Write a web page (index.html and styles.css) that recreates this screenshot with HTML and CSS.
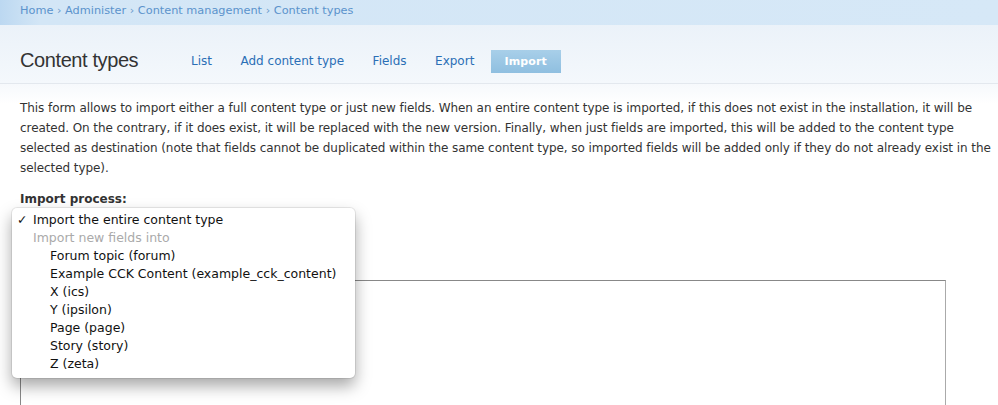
FILE: index.html
```html
<!DOCTYPE html>
<html>
<head>
<meta charset="utf-8">
<link rel="stylesheet" href="styles.css">
</head>
<body>
<div class="breadcrumb">
  <a href="#">Home</a> › <a href="#">Administer</a> › <a href="#">Content management</a> › <a href="#">Content types</a>
</div>
<div class="header">
  <h1 class="title">Content types</h1>
  <ul class="tabs">
    <li><a href="#">List</a></li>
    <li><a href="#">Add content type</a></li>
    <li><a href="#">Fields</a></li>
    <li><a href="#">Export</a></li>
    <li class="active"><a href="#">Import</a></li>
  </ul>
</div>
<div class="content">
  <p class="intro">This form allows to import either a full content type or just new fields. When an entire content type is imported, if this does not exist in the installation, it will be created. On the contrary, if it does exist, it will be replaced with the new version. Finally, when just fields are imported, this will be added to the content type selected as destination (note that fields cannot be duplicated within the same content type, so imported fields will be added only if they do not already exist in the selected type).</p>
  <div class="field">
    <label class="label">Import process:</label>
    <div class="select-wrap">
      <div class="select">Import the entire content type</div>
      <div class="popup">
        <div class="opt selected"><span class="check">✓</span>Import the entire content type</div>
        <div class="opt group">Import new fields into</div>
        <div class="opt sub">Forum topic (forum)</div>
        <div class="opt sub">Example CCK Content (example_cck_content)</div>
        <div class="opt sub">X (ics)</div>
        <div class="opt sub">Y (ipsilon)</div>
        <div class="opt sub">Page (page)</div>
        <div class="opt sub">Story (story)</div>
        <div class="opt sub">Z (zeta)</div>
      </div>
    </div>
  </div>
  <div class="field">
    <label class="label faded">Import data:</label>
    <div class="textarea"></div>
  </div>
</div>
</body>
</html>
```
FILE: styles.css
```css
html, body { margin: 0; padding: 0; background: #fff; }
body { font-family: "DejaVu Sans", Verdana, sans-serif; font-size: 12px; color: #333; overflow: hidden; height: 405px; }
a { text-decoration: none; }
.breadcrumb {
  height: 25px; box-sizing: border-box; padding: 2px 20px 0;
  background: linear-gradient(to right, #bcd8f1 0, #d3e6f6 40px, #d6e8f7 100%);
  color: #6b9ccc; font-size: 11.3px; line-height: 17px;
}
.breadcrumb a { color: #5b93cc; }
.header {
  height: 59px; box-sizing: border-box; display: flex; align-items: flex-start;
  padding: 0 20px; background: linear-gradient(to bottom, #ebf2f9, #f4f8fc);
  border-bottom: 1px solid #e3e8ee;
}
.title {
  margin: 23px 0 0; font-family: "Liberation Sans", Arial, sans-serif; font-weight: normal;
  font-size: 20px; line-height: 24px; color: #333; letter-spacing: -0.4px; width: 156.75px; flex: none;
}
.tabs { list-style: none; margin: 25px 0 0; padding: 0; display: flex; }
.tabs li a { display: block; padding: 3px 14.25px; color: #2b6fb6; font-size: 12px; line-height: 17px; }
.tabs li.active a {
  background: linear-gradient(to bottom, #a8cfe9, #8fbfe0); color: #fff; font-weight: bold;
  font-size: 11px; padding: 3px 14px 3px; margin-left: 2px; letter-spacing: 0.1px;
}
.content { padding: 14px 0 0 20px; background: linear-gradient(to bottom, #f6f9fc, #fff 20px); }
.intro { margin: 0; line-height: 20px; letter-spacing: -0.07px; }
.field { margin-top: 12px; }
.label { display: block; font-weight: bold; line-height: 18px; }
.faded { color: #ddd; margin-top: 31px; }
.select-wrap { position: relative; height: 20px; }
.select {
  margin-left: -8px; width: 288px; height: 18px; border-radius: 4px; background: #f1f4f8; color: #f1f4f8;
  font-size: 12px; line-height: 18px; padding-left: 8px; position: relative; top: 3px;
}
.popup {
  position: absolute; left: -8px; top: 0; width: 343px; box-sizing: border-box;
  background: #fff; border-radius: 5px; padding: 3px 0 5px;
  box-shadow: 0 8px 16px rgba(0,0,0,0.35), 0 0 0 1px rgba(0,0,0,0.08);
  font-family: "DejaVu Sans", "Lucida Grande", sans-serif; font-size: 12.5px; color: #111;
}
.opt { height: 18px; line-height: 18px; padding-left: 21px; position: relative; white-space: nowrap; }
.opt .check { position: absolute; left: 5px; font-weight: bold; }
.opt.group { color: #aaa; }
.opt.sub { padding-left: 38px; }
.textarea { margin-top: 3px; height: 150px; width: 926px; border: 1px solid #888; border-right-color: #aaa; box-sizing: border-box; }
```
